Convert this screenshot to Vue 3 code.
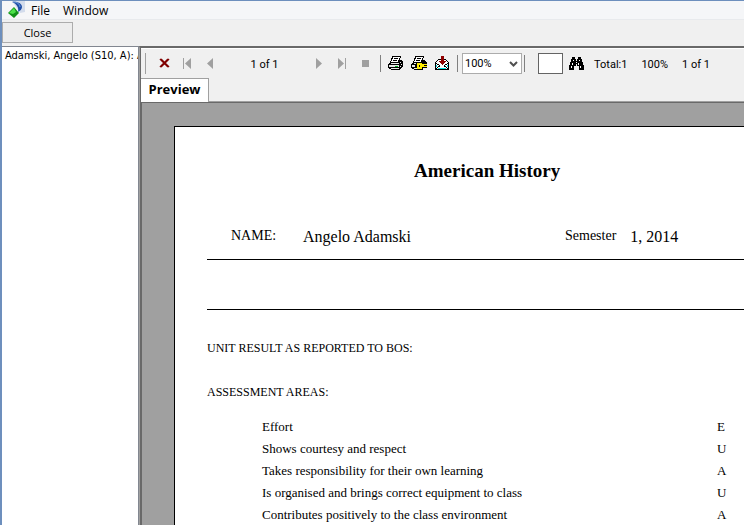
<script setup>
import { ref } from 'vue'

const zoom = ref('100%')
const query = ref('')
const areas = [
  { name: 'Effort', grade: 'E' },
  { name: 'Shows courtesy and respect', grade: 'U' },
  { name: 'Takes responsibility for their own learning', grade: 'A' },
  { name: 'Is organised and brings correct equipment to class', grade: 'U' },
  { name: 'Contributes positively to the class environment', grade: 'A' },
]
</script>

<template>
  <div class="window">
    <nav class="menubar">
      <svg class="logo" width="18" height="18" viewBox="0 0 18 18" aria-hidden="true">
        <path d="M4 0h13v11l-5 1z" fill="#d3dcec" />
        <path d="M4 1c6-1 10 2 10 5 0 2-2 4-4 5 1-4-1-8-6-10z" fill="#1f4fa8" />
        <path d="M5 1c4 0 7 2 7 5" fill="none" stroke="#6f9bd8" />
        <path d="M6 6l5 6-5 5-6-5z" fill="#109018" />
        <path d="M6 7l2 4-3 2-4-1z" fill="#4be04a" />
      </svg>
      <button class="menu">File</button>
      <button class="menu">Window</button>
    </nav>
    <div class="actions"><button class="close">Close</button></div>
    <main class="body">
      <aside class="list"><a class="student" href="#report">Adamski, Angelo (S10, A): A</a></aside>
      <section class="viewer">
        <div class="toolbar">
          <span class="grip"></span>
          <button class="tool" aria-label="Close view">
            <svg width="11" height="11" viewBox="0 0 11 11"><path d="M1 1l8 8M2 1l8 8M1 9l8-8M2 9l8-8" stroke="#800000" stroke-width="1.500" /></svg>
          </button>
          <button class="tool" aria-label="First page">
            <svg width="9" height="11" viewBox="0 0 9 11" fill="#a0a0a0"><path d="M0 0h1v11H0zM8 0v11L2 5.500z" /></svg>
          </button>
          <button class="tool" aria-label="Previous page">
            <svg width="7" height="11" viewBox="0 0 7 11" fill="#a0a0a0"><path d="M6 0v11L0 5.500z" /></svg>
          </button>
          <span class="page">1 of 1</span>
          <button class="tool" aria-label="Next page">
            <svg width="7" height="11" viewBox="0 0 7 11" fill="#a0a0a0"><path d="M0 0v11l6-5.500z" /></svg>
          </button>
          <button class="tool" aria-label="Last page">
            <svg width="9" height="11" viewBox="0 0 9 11" fill="#a0a0a0"><path d="M0 0v11l6-5.500zM7 0h1v11H7z" /></svg>
          </button>
          <button class="tool" aria-label="Stop">
            <svg width="7" height="7" viewBox="0 0 7 7"><path d="M0 0h7v7H0z" fill="#a0a0a0" /></svg>
          </button>
          <span class="rule"></span>
          <button class="tool" aria-label="Print">
            <svg width="16" height="15" viewBox="0 0 16 15" shape-rendering="crispEdges">
              <path d="M4 0h9v2h-1v2h2v1h1v6h-1v1h-1v1h-1v1H3v-1H1v-1H0V8h1V7h1V5h1V2h1z" fill="#000" />
              <path d="M5 1h7v1h-1v2h-1v2H3V5h1V3h1z" fill="#fff" /><path d="M6 2h4v1H6zM5 4h4v1H5z" fill="#000" />
              <path d="M3 7h8v1H3zM1 9h10v2H1zM3 12h8v1H3zM12 6h1v1h-1zM13 8h1v1h-1zM12 10h1v1h-1z" fill="#e8e8e8" />
              <path d="M7 10h3v1H7z" fill="#00b020" />
            </svg>
          </button>
          <button class="tool" aria-label="Printer setup">
            <svg width="16" height="15" viewBox="0 0 16 15" shape-rendering="crispEdges">
              <path d="M4 0h9v2h-1v2h2v1h1v1h1v6h-4v2H3v-1H1v-1H0V8h1V7h1V5h1V2h1z" fill="#000" />
              <path d="M5 1h7v1h-1v2h-1v2H3V5h1V3h1z" fill="#fff" /><path d="M6 2h4v1H6zM5 4h4v1H5z" fill="#000" />
              <path d="M3 7h2v1H3zM1 9h3v2H1zM3 12h3v1H3z" fill="#e8e8e8" />
              <path d="M6 7h5v1h5v1h-3v1h3v1h-5v2H6z" fill="#ffee00" />
              <path d="M8 9h1v2H8z" fill="#000" />
            </svg>
          </button>
          <button class="tool" aria-label="Export">
            <svg width="15" height="15" viewBox="0 0 15 15" shape-rendering="crispEdges">
              <path d="M3 3h8v1h1v1h1v1h1v8H0V6h1V5h1V4h1z" fill="#000" />
              <path d="M3 4h8v1h1v1h1v7H1V6h1V5h1z" fill="#fff" />
              <path d="M1 7h1v1h2v1h1v1h4V9h1V8h2V7h1v1h-1v1h-2v1h1v1h1v1h1v1h-1v-1h-1v-1H9v-1H5v1H3v1H2v1H1v-1h1v-1h1v-1h1V9H2V8H1z" fill="#000" />
              <path d="M1 9h1v2H1zM12 9h1v2h-1zM3 12h8v1H3z" fill="#00dede" />
              <path d="M6 0h3v5h2v1h-1v1H9v1H8v1H7V8H6V7H5V6H4V5h2z" fill="#900000" />
            </svg>
          </button>
          <span class="rule"></span>
          <label class="zoom">
            <select v-model="zoom" aria-label="Zoom"><option>100%</option></select>
            <svg width="9" height="6" viewBox="0 0 9 6"><path d="M1 1l3.500 3.500L8 1" fill="none" stroke="#505050" stroke-width="2" /></svg>
          </label>
          <span class="rule"></span>
          <input v-model="query" class="search" type="text" aria-label="Search text" />
          <button class="tool" aria-label="Find">
            <svg width="15" height="13" viewBox="0 0 15 13" shape-rendering="crispEdges">
              <path d="M3 0h3v2h1v2h1V2h1V0h3v2h1v3h1v3h1v5h-5V9H8V7H7v2H5v4H0V8h1V5h1V2h1z" />
              <path d="M4 3h1v1H4zM3 6h1v2H3zM2 9h1v2H2zM10 3h1v1h-1zM9 6h1v2H9zM11 9h1v2h-1zM7 5h1v1H7z" fill="#fff" />
            </svg>
          </button>
          <span class="status">Total:1</span><span class="status">100%</span><span class="status">1 of 1</span>
        </div>
        <div class="tabs"><button class="tab">Preview</button></div>
        <div class="canvas">
          <article id="report" class="paper">
            <h1>American History</h1>
            <div class="details">
              <span class="label name">NAME:</span><span class="value person">Angelo Adamski</span>
              <span class="label">Semester</span><span class="value">1, 2014</span>
            </div>
            <div class="blank"></div>
            <h2>UNIT RESULT AS REPORTED TO BOS:</h2>
            <h2>ASSESSMENT AREAS:</h2>
            <table>
              <tbody>
                <tr v-for="area in areas" :key="area.name">
                  <td class="area">{{ area.name }}</td><td>{{ area.grade }}</td>
                </tr>
              </tbody>
            </table>
          </article>
        </div>
      </section>
    </main>
  </div>
</template>

<style>
body { margin: 0; overflow: hidden; }
</style>
<style scoped>
* { box-sizing: border-box; }
button, input, select { font: inherit; color: inherit; margin: 0; }
svg { display: block; flex: none; }
.window {
  display: flex; flex-direction: column; height: 100vh;
  border-top: 1px solid #6d8fbd; border-left: 2px solid #6d8fbd;
  background: #f0f0f0; color: #000; overflow: hidden;
  font: 11px/16px "DejaVu Sans Condensed", "Noto Sans", sans-serif;
}
.menubar {
  display: flex; align-items: center; flex: none; height: 19px; padding-left: 6px; gap: 13px;
  background: #f5f6f8; border-bottom: 1px solid #e8eaed;
  font: 12px/16px "Open Sans", sans-serif;
}
.menu { border: 0; padding: 2px 0 0; background: none; }
.logo { margin-right: -8px; }
.actions { flex: none; height: 26px; padding-top: 2px; }
.close { width: 71px; height: 21px; padding: 0; background: #ededed; border: 1px solid #acacac; font: 11px/16px "Open Sans", sans-serif; }
.body { display: flex; flex: 1; min-height: 0; }
.list { flex: none; width: 137px; padding: 1px 0 0 3px; background: #fff; border-top: 1px solid #828790; border-right: 1px solid #828790; overflow: hidden; }
.student { display: block; color: inherit; text-decoration: none; white-space: nowrap; }
.viewer { display: flex; flex-direction: column; flex: 1; min-width: 0; border-top: 2px solid #696969; border-left: 1px solid #a0a0a0; box-shadow: inset 1px 0 #696969; padding-left: 1px; }
.toolbar {
  display: flex; align-items: center; flex: none; height: 30px; padding-left: 3px; gap: 7px;
  border-top: 1px solid #fff; white-space: nowrap; overflow: hidden;
  font: 11px/14px Roboto, sans-serif;
}
.grip { flex: none; width: 2px; height: 21px; margin-right: 3px; border-right: 1px solid #a0a0a0; }
.tool { display: flex; align-items: center; justify-content: center; flex: none; width: 16px; height: 20px; padding: 0; border: 0; background: none; }
.rule { flex: none; width: 1px; height: 17px; background: #808080; }
.page { flex: none; width: 79px; text-align: center; }
.page, .status { padding-top: 2px; }
.zoom { position: relative; flex: none; width: 60px; height: 21px; margin: 0 -5px 0 -3px; }
.zoom select { appearance: none; width: 100%; height: 100%; padding: 0 2px; border: 1px solid #acacac; border-radius: 0; background: #fff; }
.zoom svg { position: absolute; right: 4px; top: 8px; pointer-events: none; }
.search { flex: none; width: 25px; height: 21px; padding: 0; margin: 0 -2px 0 6px; border: 1px solid #646464; border-radius: 0; background: #fff; }
.status { margin: 0 4px 0 3px; }
.tabs { display: flex; flex: none; height: 24px; border-bottom: 1px solid #a0a0a0; }
.tab { height: 24px; width: 68px; padding: 0 0 3px; background: #fff; border: 1px solid #a0a0a0; border-left: 0; border-bottom: 0; font: bold 13px/16px "Open Sans", sans-serif; }
.canvas { flex: 1; min-height: 0; padding: 23px 0 0 32px; background: #a0a0a0; border-top: 1px solid #696969; border-left: 1px solid #696969; overflow: hidden; }
.paper { height: 100%; padding: 32px 0 0 32px; background: #fff; border-top: 1px solid #000; border-left: 1px solid #000; overflow: hidden; font: 13px/22px "Liberation Serif", serif; }
h1 { margin: 0; padding-left: 207px; font-size: 19px; line-height: 24px; white-space: nowrap; }
.details { display: flex; align-items: flex-start; height: 77px; padding: 43px 0 0 24px; border-bottom: 1px solid #000; white-space: nowrap; }
.label { font-size: 14px; line-height: 20px; margin-right: 14px; }
.value { font-size: 16px; line-height: 22px; }
.name { width: 58px; }
.person { width: 262px; }
.blank { height: 50px; border-bottom: 1px solid #000; }
h2 { margin: 0 0 22px; font-size: 12px; line-height: 22px; font-weight: normal; }
.blank + h2 { margin-top: 27px; }
table { margin: -9px 0 0 55px; border-collapse: collapse; }
td { padding: 0; white-space: nowrap; }
.area { width: 455px; }
</style>
